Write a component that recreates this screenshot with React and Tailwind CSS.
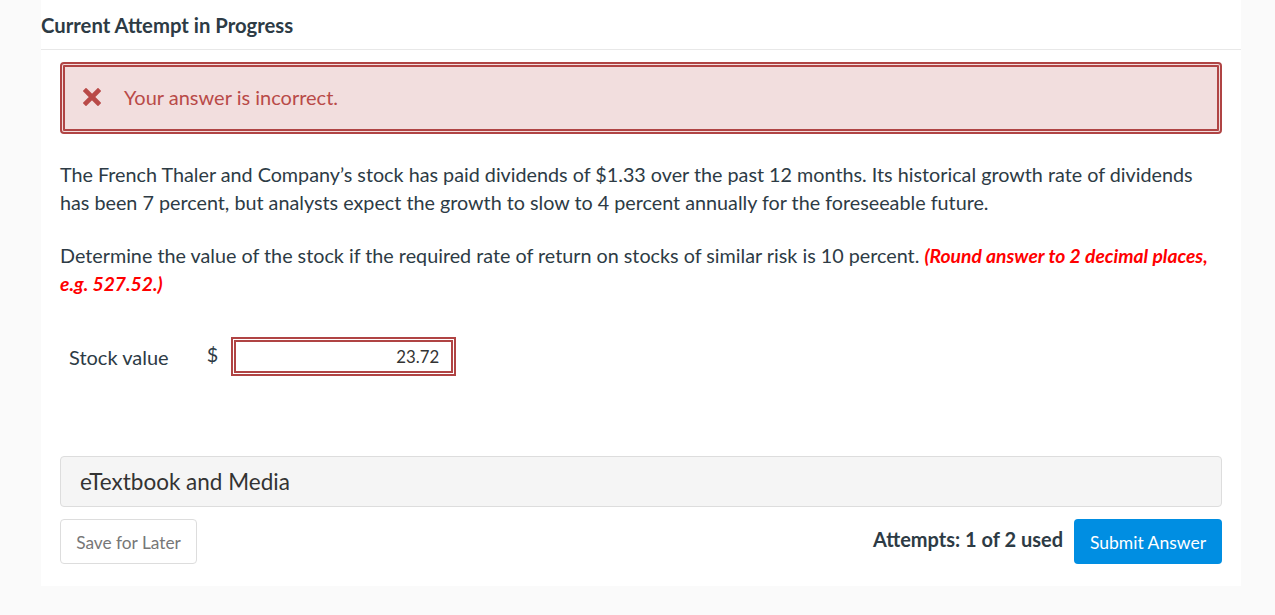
import React from 'react'

function XMark() {
  return (
    <svg width="18" height="18" viewBox="0 0 18 18" className="shrink-0">
      <path d="M3 3 15 15M15 3 3 15" stroke="#b94a48" strokeWidth="4.6" strokeLinecap="square" />
    </svg>
  )
}

export default function App() {
  return (
    <div className="min-h-[615px] bg-[#fafafa] font-['Lato','Open_Sans',sans-serif] text-[#2d3b45]">
      <div className="ml-[41px] w-[1200px] bg-white pb-[22px]">
        <div className="border-b border-[#e8e8e8] pt-[13px] pb-[11px]">
          <h2 className="text-[20.3px] font-bold leading-[25px] text-[#2d3b45]">Current Attempt in Progress</h2>
        </div>

        <div className="px-[19px]">
          <div className="mt-[12px] flex h-[72px] items-center gap-[23px] rounded-[4px] border-[5px] border-double border-[#b04444] bg-[#f2dede] px-[18px] pb-[3px]">
            <XMark />
            <span className="text-[20px] text-[#b94a48]">Your answer is incorrect.</span>
          </div>

          <p className="mt-[27px] text-[19.75px] leading-[28px]">
            The French Thaler and Company’s stock has paid dividends of $1.33 over the past 12 months. Its historical growth rate of dividends has been 7 percent, but analysts expect the growth to slow to 4 percent annually for the foreseeable future.
          </p>
          <p className="mt-[25px] text-[19.75px] leading-[28px]">
            Determine the value of the stock if the required rate of return on stocks of similar risk is 10 percent.{' '}
            <span className="text-[19.3px] font-bold italic text-[#ff0000]">(Round answer to 2 decimal places, e.g. 527.52.)</span>
          </p>

          <div className="mt-[39px] flex items-center">
            <span className="ml-[9px] text-[20px]">Stock value</span>
            <span className="ml-[38px] -mt-[4px] text-[19.8px]">$</span>
            <div className="ml-[13px] box-border flex h-[39px] w-[225px] items-center justify-end border-[5px] border-double border-[#b04444] bg-white pr-[12px] text-[16.8px] text-[#333]">
              23.72
            </div>
          </div>

          <div className="mt-[80px] flex h-[51px] items-center rounded-[4px] border border-[#dddddd] bg-[#f5f5f5] px-[19px] text-[22.5px] text-[#333]">
            eTextbook and Media
          </div>

          <div className="mt-[12px] flex items-center">
            <button className="h-[45px] w-[137px] rounded-[4px] border border-[#dddddd] bg-white pt-[2px] text-[17.3px] text-[#777]">
              Save for Later
            </button>
            <div className="ml-auto flex items-center gap-[11px]">
              <span className="-mt-[6px] text-[20px] font-bold text-[#2d3b45]">Attempts: 1 of 2 used</span>
              <button className="h-[45px] w-[148px] rounded-[4px] bg-[#008ee2] pt-[3px] text-[17.5px] text-white">
                Submit Answer
              </button>
            </div>
          </div>
        </div>
      </div>
    </div>
  )
}
